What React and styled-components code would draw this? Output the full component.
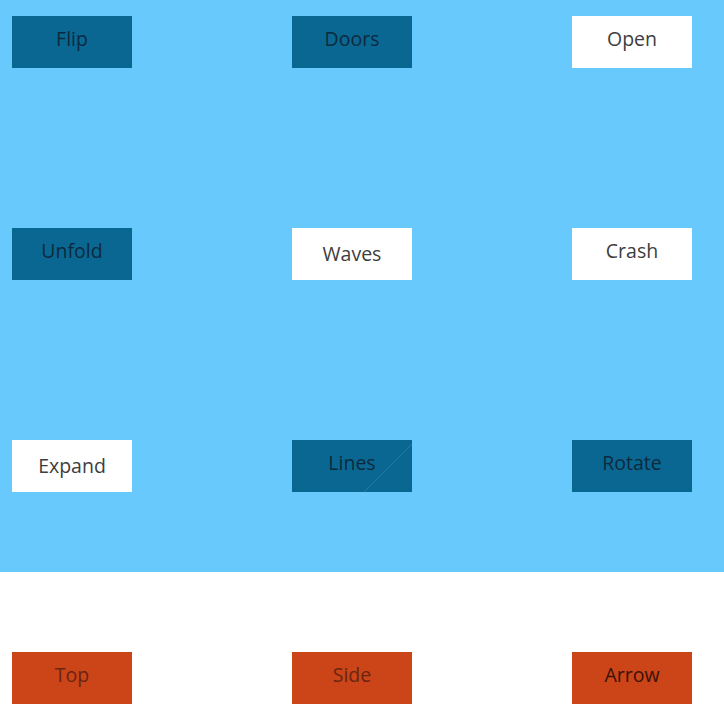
import React from 'react'
import styled, { createGlobalStyle, css } from 'styled-components'

const GlobalStyle = createGlobalStyle`
  html, body {
    margin: 0;
    padding: 0;
    background: #ffffff;
  }
  body {
    font-family: "Open Sans", "Noto Sans", "Liberation Sans", sans-serif;
  }
`;

const Stage = styled.section`
  background: ${p => p.$bg};
  padding: ${p => p.$pad};
  display: flex;
  flex-direction: column;
  gap: 160px;
`;

const Row = styled.div`
  display: flex;
  gap: 160px;
  padding-left: 12px;
`;

const variants = {
  dark: css`
    background: #0a6792;
    color: #0d2a3d;
  `,
  light: css`
    background: #ffffff;
    color: #3d3d3d;
  `,
  orange: css`
    background: #cb4519;
    color: #6a2412;
  `,
};

const Button = styled.div`
  position: relative;
  flex: none;
  width: 120px;
  height: 52px;
  display: flex;
  align-items: center;
  justify-content: center;
  box-sizing: border-box;
  padding-bottom: ${p => (p.$low ? '2px' : '8px')};
  font-size: 19.5px;
  overflow: hidden;
  cursor: pointer;
  ${p => variants[p.$kind]}
  ${p => p.$kind === 'orange' && p.$strong && css`color: #3a1208;`}
`;

const Label = styled.span`
  position: relative;
  z-index: 1;
`;

const Slash = styled.svg`
  position: absolute;
  left: 0;
  top: 0;
  width: 120px;
  height: 52px;
`;

const blueRows = [
  [
    { label: 'Flip', kind: 'dark' },
    { label: 'Doors', kind: 'dark' },
    { label: 'Open', kind: 'light' },
  ],
  [
    { label: 'Unfold', kind: 'dark' },
    { label: 'Waves', kind: 'light', low: true },
    { label: 'Crash', kind: 'light' },
  ],
  [
    { label: 'Expand', kind: 'light', low: true },
    { label: 'Lines', kind: 'dark', slash: true },
    { label: 'Rotate', kind: 'dark' },
  ],
];

const whiteRow = [
  { label: 'Top', kind: 'orange' },
  { label: 'Side', kind: 'orange' },
  { label: 'Arrow', kind: 'orange', strong: true },
];

const Btn = ({ item }) => (
  <Button $kind={item.kind} $low={item.low} $strong={item.strong}>
    {item.slash && (
      <Slash viewBox="0 0 120 52">
        <line x1="72" y1="52" x2="121" y2="3" stroke="#2a7ea8" strokeWidth="0.8" />
      </Slash>
    )}
    <Label>{item.label}</Label>
  </Button>
);

const App = () => {
  return (
    <>
      <GlobalStyle />
      <Stage $bg="#67c9fc" $pad="16px 0 80px">
        {blueRows.map((row, i) => (
          <Row key={i}>
            {row.map(item => <Btn key={item.label} item={item} />)}
          </Row>
        ))}
      </Stage>
      <Stage $bg="#ffffff" $pad="80px 0 14px">
        <Row>
          {whiteRow.map(item => <Btn key={item.label} item={item} />)}
        </Row>
      </Stage>
    </>
  )
}

export default App
